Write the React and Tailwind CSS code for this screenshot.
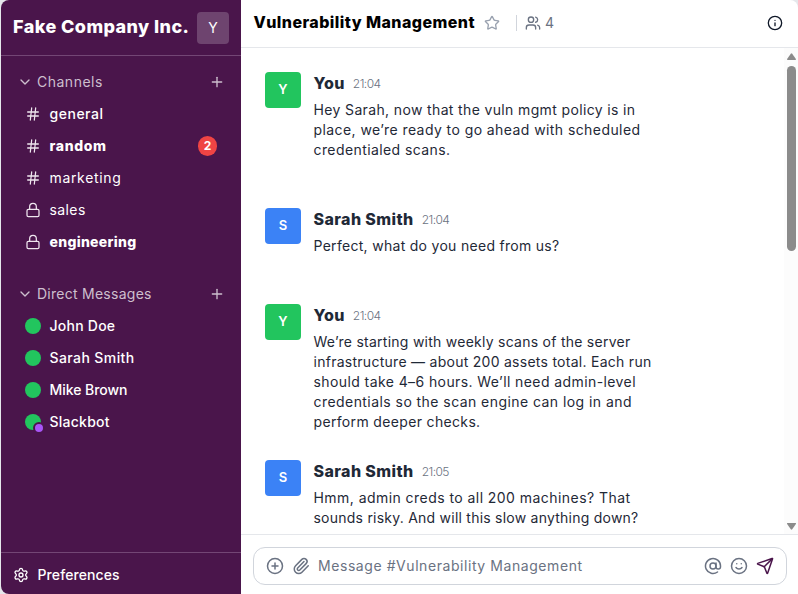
import React from "react";
import { AtSign, ChevronDown, CirclePlus, Hash, Info, Lock, Paperclip, Plus, Send, Settings, Smile, Star, Users } from "lucide-react";

const channels = [
  { name: "general", icon: Hash, style: "font-medium tracking-[0.52px]" },
  { name: "random", icon: Hash, style: "font-extrabold tracking-[0.65px]", badge: 2 },
  { name: "marketing", icon: Hash, style: "tracking-[0.67px]" },
  { name: "sales", icon: Lock, style: "tracking-[0.4px]" },
  { name: "engineering", icon: Lock, style: "font-extrabold tracking-[0.3px]" },
];

const people = [
  { name: "John Doe", style: "tracking-[0.24px]" },
  { name: "Sarah Smith", style: "tracking-[0.4px]" },
  { name: "Mike Brown", style: "tracking-[-0.05px]" },
  { name: "Slackbot", style: "tracking-[0.24px]", bot: true },
];

const messages = [
  {
    name: "You", initial: "Y", time: "21:04", color: "bg-[#22c55e]", height: "h-[136px]",
    lines: [
      ["Hey Sarah, now that the vuln mgmt policy is in", "tracking-[0.361px]"],
      ["place, we’re ready to go ahead with scheduled", "tracking-[0.42px]"],
      ["credentialed scans.", "tracking-[0.411px]"],
    ],
  },
  {
    name: "Sarah Smith", initial: "S", time: "21:04", color: "bg-[#3b82f6]", height: "h-24",
    lines: [["Perfect, what do you need from us?", "tracking-[0.295px]"]],
  },
  {
    name: "You", initial: "Y", time: "21:04", color: "bg-[#22c55e]", height: "h-[156px]",
    lines: [
      ["We’re starting with weekly scans of the server", "tracking-[0.256px]"],
      ["infrastructure — about 200 assets total. Each run", "tracking-[0.269px]"],
      ["should take 4–6 hours. We’ll need admin-level", "tracking-[0.409px]"],
      ["credentials so the scan engine can log in and", "tracking-[0.441px]"],
      ["perform deeper checks.", "tracking-[0.342px]"],
    ],
  },
  {
    name: "Sarah Smith", initial: "S", time: "21:05", color: "bg-[#3b82f6]", height: "h-[74px]",
    lines: [
      ["Hmm, admin creds to all 200 machines? That", "tracking-[0.446px]"],
      ["sounds risky. And will this slow anything down?", "tracking-[0.235px]"],
    ],
  },
];

function SectionTitle({ children, className }) {
  return (
    <div className="flex h-8 items-center px-4 text-[#cdbfce]">
      <ChevronDown size={16} />
      <span className={`ml-1 flex-1 ${className}`}>{children}</span>
      <Plus size={16} />
    </div>
  );
}

function Sidebar() {
  return (
    <aside className="flex w-60 shrink-0 flex-col bg-[#4a154b] text-sm text-white">
      <div className="flex h-14 items-center justify-between border-b border-[#734675] px-3">
        <h1 className="whitespace-nowrap pb-0.5 text-[18px] font-extrabold tracking-[0.42px]">Fake Company Inc.</h1>
        <div className="flex size-8 shrink-0 items-center justify-center rounded bg-[#6e446f] text-sm">Y</div>
      </div>
      <nav className="flex flex-1 flex-col pt-2.5">
        <SectionTitle className="tracking-[0.5px]">Channels</SectionTitle>
        {channels.map(({ name, icon: Icon, style, badge }) => (
          <div key={name} className="flex h-8 items-center pl-6 pr-6">
            <Icon size={16} strokeWidth={1.9} className="text-[#eee5ee]" />
            <span className={`ml-[8.500px] flex-1 ${style}`}>{name}</span>
            {badge && <span className="flex h-5 w-[19px] items-center justify-center rounded-full bg-[#ef4444] text-xs font-bold">{badge}</span>}
          </div>
        ))}
        <div className="h-5" />
        <SectionTitle className="tracking-[0.26px]">Direct Messages</SectionTitle>
        {people.map(({ name, style, bot }) => (
          <div key={name} className="flex h-8 items-center pl-6">
            <span className="relative size-4 rounded-full bg-[#22c55e]">
              {bot && <span className="absolute -bottom-1 -right-1 size-3 rounded-full border-2 border-[#4a154b] bg-[#a855f7]" />}
            </span>
            <span className={`ml-[8.500px] font-medium ${style}`}>{name}</span>
          </div>
        ))}
      </nav>
      <div className="flex h-[42px] items-center border-t border-[#734675] pl-3 pt-[3px]">
        <Settings size={16} />
        <span className="ml-[8.500px] font-medium tracking-[0.1px]">Preferences</span>
      </div>
    </aside>
  );
}

function Message({ name, initial, time, color, height, lines }) {
  return (
    <article className={`flex shrink-0 gap-[12.500px] ${height}`}>
      <div className={`flex size-9 shrink-0 items-center justify-center rounded text-[13px] font-semibold text-white ${color}`}>{initial}</div>
      <div className="text-[#1f2937]">
        <div className="flex h-6 items-center gap-2">
          <span className="pb-0.5 text-base font-extrabold tracking-[0.4px]">{name}</span>
          <span className="text-xs font-light tracking-[-0.55px] text-gray-500">{time}</span>
        </div>
        <div className="mt-1 text-sm leading-5">
          {lines.map(([text, tracking]) => <p key={text} className={`whitespace-nowrap ${tracking}`}>{text}</p>)}
        </div>
      </div>
    </article>
  );
}

function Scrollbar() {
  return (
    <div className="flex w-3.5 shrink-0 flex-col items-center bg-[#fcfcfc] pb-1 pt-[5px]">
      <svg width="9" height="8" viewBox="0 0 9 8" fill="#8b8b8b"><path d="M3.8.7a.9.9 0 0 1 1.4 0L8.9 6c.3.6 0 1-.6 1H.7C.1 7-.2 6.6.1 6z" /></svg>
      <div className="mt-[5px] h-[185px] w-[9px] rounded-full bg-[#8b8b8b]" />
      <svg className="mt-auto" width="9" height="8" viewBox="0 0 9 8" fill="#8b8b8b"><path d="M3.8 7.3a.9.9 0 0 0 1.4 0L8.9 2c.3-.6 0-1-.6-1H.7C.1 1-.2 1.4.1 2z" /></svg>
    </div>
  );
}

export default function App() {
  return (
    <div className="h-[594px] w-[798px] bg-[#e5e7eb] pl-px font-['Inter',sans-serif]">
      <div className="flex h-full overflow-hidden rounded-l-lg rounded-tr-lg bg-white">
        <Sidebar />
        <main className="flex min-w-0 flex-1 flex-col">
          <header className="flex h-12 shrink-0 items-center border-b border-gray-200 pb-0.5 pl-[12.500px] pr-[15px]">
            <h2 className="w-[223px] whitespace-nowrap pb-0.5 text-base font-extrabold tracking-[0.44px] text-black">Vulnerability Management</h2>
            <Star size={16} className="ml-[7.500px] text-gray-400" />
            <span className="ml-4 h-4 w-px bg-gray-300" />
            <Users size={16} className="ml-2 text-gray-500" />
            <span className="ml-1 text-sm text-gray-500">4</span>
            <Info size={16} className="ml-auto text-gray-900" />
          </header>
          <div className="flex h-[486px] shrink-0 overflow-hidden">
            <section className="flex flex-1 flex-col pl-6 pt-6">
              {messages.map((message, i) => <Message key={i} {...message} />)}
            </section>
            <Scrollbar />
          </div>
          <footer className="flex-1 border-t border-gray-200 pl-3 pr-[11px] pt-3">
            <div className="flex h-[38px] items-center rounded-xl border border-gray-300 px-3 text-gray-500">
              <CirclePlus size={18} />
              <Paperclip size={18} className="ml-2" />
              <span className="ml-2 flex-1 text-sm tracking-[0.565px]">Message #Vulnerability Management</span>
              <AtSign size={18} />
              <Smile size={18} className="ml-2" />
              <Send size={18} className="ml-2 text-[#4a154b]" />
            </div>
          </footer>
        </main>
      </div>
    </div>
  );
}
